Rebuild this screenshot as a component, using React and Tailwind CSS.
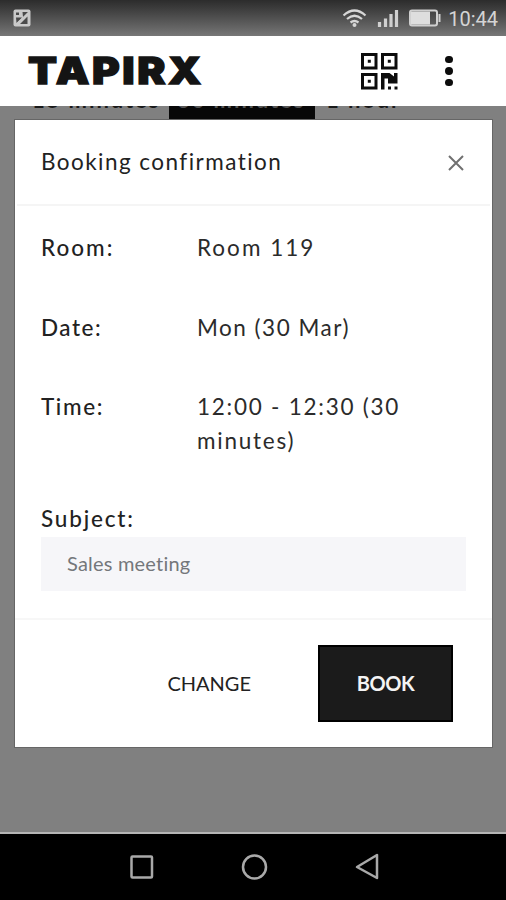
import React from 'react';

const details = [
  { label: 'Room:', value: 'Room 119', row: 'h-20', labelClass: 'tracking-[2px]', valueClass: 'tracking-[2px]' },
  { label: 'Date:', value: 'Mon (30 Mar)', row: 'h-[79px]', labelClass: 'tracking-[1.5px]', valueClass: 'tracking-[1.5px]' },
  { label: 'Time:', value: '12:00 - 12:30 (30 minutes)', row: 'h-28', labelClass: 'tracking-[1.6px]', valueClass: 'tracking-[1.75px]' },
];

const StatusBar = () => (
  <div className="flex h-9 items-center justify-between bg-linear-to-b from-[#2c2c2c] to-[#777777] pl-[13px] pr-2">
    <svg width="18" height="18" viewBox="0 0 18 18">
      <rect x="0.5" y="0.5" width="17" height="17" rx="2" fill="#c9c9c9" />
      <path d="M3 3.500h3v2.500h-3z M9.500 3h5.500L10 8z M3 8.500h6L3.500 14z M14.500 7.500V15H7z" fill="#4a4a4a" />
      <path d="M3 15.500 L15.500 4" stroke="#c9c9c9" strokeWidth="1.500" />
    </svg>
    <div className="flex items-center">
      <svg width="100" height="20" viewBox="343 8 100 20" fill="none">
        <path d="M344.500 15.500 Q355.500 5.500 366.500 15.500 M348 19 Q355.500 12.500 363 19 M351.500 22.500 Q355.500 19.500 359.500 22.500" stroke="#d6d6d6" strokeWidth="2.200" />
        <circle cx="355.500" cy="25" r="2" fill="#d6d6d6" />
        <path d="M380.500 27 V22 M386.500 27 V18.500 M392 27 V14 M397.500 27 V10" stroke="#d0d0d0" strokeWidth="3.200" />
        <rect x="411" y="10.500" width="27" height="15" rx="2" stroke="#d0d0d0" strokeWidth="2" />
        <rect x="412" y="11.500" width="19" height="13" fill="#dedede" />
        <path d="M440.500 14 V22" stroke="#d0d0d0" strokeWidth="2" />
      </svg>
      <span className="mt-0.5 ml-1.5 font-[Roboto] text-[20px] leading-none text-[#d4d4d4]">10:44</span>
    </div>
  </div>
);

const Header = () => (
  <header className="flex h-[70px] items-center bg-white">
    <h1 className="ml-7 w-[333px] origin-left scale-x-[1.16] font-[Inter] text-[36.5px] leading-none font-black tracking-[2.2px] text-[#141414] [-webkit-text-stroke:1.3px_#141414]">
      TAPIRX
    </h1>
    <button className="h-[37px] w-[37px] shrink-0">
      <svg width="37" height="37" viewBox="0 0 37 37">
        <g fill="none" stroke="#0c0c0c" strokeWidth="3">
          <rect x="1.500" y="1.500" width="13.500" height="13.500" />
          <rect x="21.500" y="1.500" width="13.500" height="13.500" />
          <rect x="1.500" y="21.500" width="13.500" height="13.500" />
        </g>
        <path d="M6.800 6.800h3v3h-3z M26.800 6.800h3v3h-3z M6.800 26.800h3v3h-3z M20 20h8.500l4.500 3.500V20h3.500v10.500h-9.500v-5h-3.500v11h-3.500z M27 33.500h3v3h-3z M33.500 33.500h3v3h-3z" fill="#0c0c0c" />
      </svg>
    </button>
    <button className="ml-[47px] flex flex-col gap-1">
      <span className="h-[7.5px] w-[7.5px] rounded-full bg-[#0c0c0c]" />
      <span className="h-[7.5px] w-[7.5px] rounded-full bg-[#0c0c0c]" />
      <span className="h-[7.5px] w-[7.5px] rounded-full bg-[#0c0c0c]" />
    </button>
  </header>
);

const DurationTabs = () => (
  <div className="flex h-[13px] overflow-hidden text-[22px] leading-[22px] font-bold tracking-[1.9px] whitespace-nowrap text-[#1a1a1a]">
    <span className="ml-8 w-[137px]"><span className="-mt-[17px] block">15 minutes</span></span>
    <span className="w-[146px] bg-[#080808] pl-2 text-[#555555]"><span className="-mt-[17px] block">30 minutes</span></span>
    <span className="ml-[11px]"><span className="-mt-[17px] block">1 hour</span></span>
  </div>
);

const BookingModal = () => (
  <section className="mr-[13px] ml-3.5 h-[629px] border border-[#666666] bg-white text-[22.5px] text-[#222222]">
    <div className="mx-0.5 flex h-[86px] items-center justify-between border-b-2 border-[#f5f5f5] pr-[26px] pl-6">
      <h2 className="tracking-[1.45px]">Booking confirmation</h2>
      <svg width="16" height="16" viewBox="0 0 16 16" stroke="#707070" strokeWidth="2" className="mt-0.5">
        <path d="M1 1 L15 15 M15 1 L1 15" />
      </svg>
    </div>
    <div className="px-[26px] pt-[25px]">
      {details.map(({ label, value, row, labelClass, valueClass }) => (
        <div key={label} className={`flex leading-[34px] ${row}`}>
          <span className={`w-[156px] shrink-0 font-medium ${labelClass}`}>{label}</span>
          <span className={`w-[225px] text-[#2b2b2b] ${valueClass}`}>{value}</span>
        </div>
      ))}
      <label className="block leading-[34px] font-medium tracking-[1.8px]">Subject:</label>
      <div className="mt-px flex h-[54px] items-center bg-[#f6f6f9] pb-0.5 pl-[26px] text-[20px] tracking-[0.2px] text-[#74777b]">Sales meeting</div>
    </div>
    <div className="mt-[27px] flex items-center justify-end border-t-2 border-[#f7f7f7] pt-[25px] pr-[39px]">
      <button className="mr-[67px] pb-0.5 text-[20px]">CHANGE</button>
      <button className="h-[77px] w-[135px] border-2 border-black bg-[#1b1b1b] pb-0.5 text-[20px] font-bold tracking-[-0.4px] text-[#f4f4f4]">BOOK</button>
    </div>
  </section>
);

const NavBar = () => (
  <nav className="h-[68px] border-t-2 border-[#b5b5b5] bg-black">
    <svg width="506" height="66" viewBox="0 834 506 66" fill="none" stroke="#a9a9a9" strokeWidth="2.500">
      <rect x="131.500" y="856.500" width="20.500" height="21" rx="1" />
      <circle cx="254.500" cy="867" r="11.500" />
      <path d="M377 855 V878 L357 867 Z" strokeLinejoin="round" />
    </svg>
  </nav>
);

const App = () => (
  <div className="flex h-[900px] w-[506px] flex-col overflow-hidden bg-[#808080] font-[Lato,sans-serif]">
    <StatusBar />
    <Header />
    <main className="flex-1">
      <DurationTabs />
      <BookingModal />
    </main>
    <NavBar />
  </div>
);

export default App;
